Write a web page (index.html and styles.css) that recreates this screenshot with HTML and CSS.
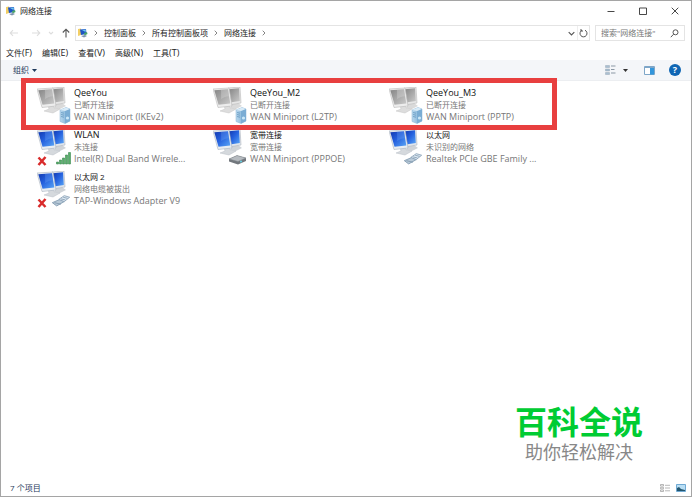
FILE: index.html
```
<!DOCTYPE html>
<html lang="zh-CN">
<head>
    <meta charset="UTF-8">
    <meta name="viewport" content="width=device-width, initial-scale=1.0">
    <title>网络连接</title>
    <link rel="stylesheet" href="styles.css">
</head>
<body>
    <svg class="defs" aria-hidden="true">
        <defs>
            <linearGradient id="blueScreen" x1="0" y1="0" x2="1" y2="1">
                <stop offset="0" stop-color="#1238ae"/>
                <stop offset="0.45" stop-color="#2460de"/>
                <stop offset="1" stop-color="#5aa6f6"/>
            </linearGradient>
            <linearGradient id="grayScreen" x1="0" y1="0" x2="1" y2="1">
                <stop offset="0" stop-color="#858585"/>
                <stop offset="0.5" stop-color="#a8a8a8"/>
                <stop offset="1" stop-color="#cacaca"/>
            </linearGradient>
            <linearGradient id="tower" x1="0" y1="0" x2="1" y2="0">
                <stop offset="0" stop-color="#b9d8ee"/>
                <stop offset="1" stop-color="#6ea5ce"/>
            </linearGradient>
            <!-- two monitors on their stands -->
            <symbol id="pcBlue" viewBox="0 0 30 27">
                <path d="M19 17l6-1 4 3-6 3-6-1z" fill="#d0d4d8"/>
                <path d="M15 1l12-1 1 16-12 2z" fill="#e1e6ec" stroke="#aeb6c0" stroke-width=".6"/>
                <path d="M16 2.200l10-.9.8 12.700-10 1.500z" fill="url(#blueScreen)"/>
                <path d="M11 18h5l1 3 6 1-7 4-9-2 5-2z" fill="#d5d9dd" stroke="#b9bfc6" stroke-width=".5"/>
                <path d="M0 2l16-1 3 18-14 1.500z" fill="#e8edf2" stroke="#aab4c0" stroke-width=".6"/>
                <path d="M1.300 3.200l13.700-.9L17.300 16.500 5.500 17.800z" fill="url(#blueScreen)"/>
                <path d="M8 2.800l7-.5 1.200 7c-3 0-6 1-8 3z" fill="#83b9f8" opacity=".25"/>
            </symbol>
            <symbol id="pcGray" viewBox="0 0 30 27">
                <path d="M19 17l6-1 4 3-6 3-6-1z" fill="#dadada"/>
                <path d="M15 1l12-1 1 16-12 2z" fill="#e6e6e6" stroke="#bbb" stroke-width=".6"/>
                <path d="M16 2.200l10-.9.8 12.700-10 1.500z" fill="url(#grayScreen)"/>
                <path d="M11 18h5l1 3 6 1-7 4-9-2 5-2z" fill="#ddd" stroke="#c4c4c4" stroke-width=".5"/>
                <path d="M0 2l16-1 3 18-14 1.500z" fill="#ededed" stroke="#bbb" stroke-width=".6"/>
                <path d="M1.300 3.200l13.700-.9L17.300 16.500 5.500 17.800z" fill="url(#grayScreen)"/>
                <path d="M8 2.800l7-.5 1.200 7c-3 0-6 1-8 3z" fill="#ddd" opacity=".35"/>
            </symbol>
            <symbol id="server" viewBox="0 0 12 17">
                <path d="M1 3l6-2.500 4 1.500v12l-5 2.500-5-2z" fill="url(#tower)" stroke="#88b2d2" stroke-width=".5"/>
                <path d="M6 4l5-2v12l-5 2.500z" fill="#7badd4"/>
                <path d="M1 3l6-2.500 4 1.500-5 2z" fill="#d9ebf7"/>
                <path d="M2 5.500l3 .7M2 7.500l3 .7M2 9.500l3 .7" stroke="#6598c0" stroke-width=".8"/>
                <circle cx="8.500" cy="11" r="1.600" fill="#cbe8f8"/>
            </symbol>
            <symbol id="signal" viewBox="0 0 15 13">
                <path d="M.5 10h2v2h-2zM3.500 8h2v4h-2zM6.500 6h2v6h-2zM9.500 3h2v9h-2zM12.500.5h2V12h-2z" fill="#58ae6a" stroke="#3c8a50" stroke-width=".6"/>
            </symbol>
            <symbol id="cable" viewBox="0 0 18 12">
                <path d="M1 8l7-3 4 2-7 4z" fill="#b9cad8" stroke="#8099af" stroke-width=".8"/>
                <path d="M7 5l5-3.500 5 1.500-5 4z" fill="#dce8f1" stroke="#8ba2b8" stroke-width=".8"/>
                <path d="M3 8l6 1.500M9 4.500l4 1M11 3l4 1" stroke="#6d89a3" stroke-width=".6"/>
            </symbol>
            <symbol id="modem" viewBox="0 0 19 10">
                <path d="M1 4l8-3.500 9 2.500v3l-8 3.500-9-3z" fill="#72777d"/>
                <path d="M1 4l8-3.500 9 2.500-8 3.500z" fill="#b6bbc0" stroke="#7d8288" stroke-width=".5"/>
                <circle cx="13" cy="6.500" r="1" fill="#67d5e8"/>
            </symbol>
            <symbol id="cross" viewBox="0 0 10 10">
                <path d="M1.500 1.500l7 7.500M8.500 1L1.500 9" stroke="#d92b2b" stroke-width="2.500"/>
            </symbol>
            <symbol id="folder" viewBox="0 0 10 10">
                <path d="M0 1l3-.5V7L0 8z" fill="#f2ce63"/>
                <path d="M2 1.500l6-.5.5 5-5.500 1z" fill="#1f55c4"/>
                <path d="M4 2l4-.5-.5 2.500z" fill="#70c9ef"/>
                <path d="M6 5l3-1 .5 2-3 1.500z" fill="#4aa46a"/>
                <path d="M3 8l4-1 2 1-3 1.500z" fill="#7d93ad"/>
            </symbol>
            <symbol id="chevron" viewBox="0 0 4 6">
                <path d="M.7.7L3 3 .7 5.300" fill="none" stroke="#777" stroke-width=".9"/>
            </symbol>
        </defs>
    </svg>

    <div class="window">
        <header class="titlebar">
            <svg class="small-icon"><use href="#folder"/></svg>
            <h1>网络连接</h1>
            <div class="window-buttons">
                <button type="button" aria-label="最小化"><svg viewBox="0 0 8 8"><path d="M.5 4.500h7"/></svg></button>
                <button type="button" aria-label="最大化"><svg viewBox="0 0 8 8"><path d="M.5 1h7v6.500h-7z"/></svg></button>
                <button type="button" aria-label="关闭"><svg viewBox="0 0 8 8"><path d="M.7.7l6.600 6.600M7.300.7L.7 7.300"/></svg></button>
            </div>
        </header>

        <div class="navbar">
            <div class="nav-buttons">
                <button type="button" aria-label="后退" disabled><svg viewBox="0 0 10 10"><path d="M9 5H1.500M4 2.200L1.200 5 4 7.800"/></svg></button>
                <button type="button" aria-label="前进" disabled><svg viewBox="0 0 10 10"><path d="M1 5h7.500M6 2.200L8.800 5 6 7.800"/></svg></button>
                <button type="button" class="recent" aria-label="最近" disabled><svg viewBox="0 0 10 10"><path d="M3 4l2 2 2-2"/></svg></button>
                <button type="button" aria-label="上移"><svg viewBox="0 0 10 10"><path d="M5 9.500V1.500M1.800 4.500L5 1.200l3.200 3.300"/></svg></button>
            </div>
            <nav class="address">
                <svg class="small-icon"><use href="#folder"/></svg>
                <svg class="chevron"><use href="#chevron"/></svg>
                <a href="#">控制面板</a>
                <svg class="chevron"><use href="#chevron"/></svg>
                <a href="#">所有控制面板项</a>
                <svg class="chevron"><use href="#chevron"/></svg>
                <a href="#">网络连接</a>
                <svg class="chevron"><use href="#chevron"/></svg>
                <button type="button" class="history" aria-label="历史记录"><svg viewBox="0 0 8 8"><path d="M1.500 2.800L4 5.300l2.500-2.500"/></svg></button>
                <button type="button" class="refresh" aria-label="刷新"><svg viewBox="0 0 9 9"><path d="M6 1.200a3.500 3.500 0 1 1-3.200.1M1 1h2v2"/></svg></button>
            </nav>
            <form class="search">
                <input type="search" placeholder='搜索"网络连接"' aria-label="搜索">
                <svg viewBox="0 0 9 9"><circle cx="5.500" cy="3.300" r="2.500"/><path d="M3.600 5.200L.8 8.200"/></svg>
            </form>
        </div>

        <div class="menubar">
            <button type="button">文件<span class="latin">(F)</span></button>
            <button type="button">编辑<span class="latin">(E)</span></button>
            <button type="button">查看<span class="latin">(V)</span></button>
            <button type="button">高级<span class="latin">(N)</span></button>
            <button type="button">工具<span class="latin">(T)</span></button>
        </div>

        <div class="toolbar">
            <button type="button" class="organize">组织 <svg class="caret" viewBox="0 0 5 3"><path d="M0 0h5L2.500 3z"/></svg></button>
            <div class="tools">
                <button type="button" aria-label="更改视图">
                    <svg class="view-icon" viewBox="0 0 11 10"><path d="M.5.5h4v2h-4zM.5 4h4v2h-4zM.5 7.500h4v2h-4z" fill="#a9bfd2" stroke="#8a9dad" stroke-width=".4"/><path d="M6 1h4.500M6 4.500h3.500M6 8h4.500" stroke="#8b98a5"/></svg>
                </button>
                <button type="button" aria-label="更多选项"><svg class="caret dark" viewBox="0 0 5 3"><path d="M0 0h5L2.500 3z"/></svg></button>
                <button type="button" class="preview" aria-label="预览窗格">
                    <svg class="pane-icon" viewBox="0 0 11 9"><path d="M.5.5h10v8H.5z" fill="#fff" stroke="#7ea6c8"/><path d="M.5 1.500h10" stroke="#7ea6c8"/><path d="M6 2h4v6.500H6z" fill="#3296dc"/></svg>
                </button>
                <button type="button" class="help" aria-label="帮助">?</button>
            </div>
        </div>

        <main class="content">
            <ul class="connections">
                <li class="connection">
                    <div class="icon"><svg class="pc"><use href="#pcGray"/></svg><svg class="badge server"><use href="#server"/></svg></div>
                    <div class="info"><p class="name latin">QeeYou</p><p>已断开连接</p><p class="latin">WAN Miniport (IKEv2)</p></div>
                </li>
                <li class="connection">
                    <div class="icon"><svg class="pc"><use href="#pcGray"/></svg><svg class="badge server"><use href="#server"/></svg></div>
                    <div class="info"><p class="name latin">QeeYou_M2</p><p>已断开连接</p><p class="latin">WAN Miniport (L2TP)</p></div>
                </li>
                <li class="connection">
                    <div class="icon"><svg class="pc"><use href="#pcGray"/></svg><svg class="badge server"><use href="#server"/></svg></div>
                    <div class="info"><p class="name latin">QeeYou_M3</p><p>已断开连接</p><p class="latin">WAN Miniport (PPTP)</p></div>
                </li>
                <li class="connection">
                    <div class="icon"><svg class="pc"><use href="#pcBlue"/></svg><svg class="cross"><use href="#cross"/></svg><svg class="badge signal"><use href="#signal"/></svg></div>
                    <div class="info"><p class="name latin">WLAN</p><p>未连接</p><p class="latin">Intel(R) Dual Band Wirele...</p></div>
                </li>
                <li class="connection">
                    <div class="icon"><svg class="pc"><use href="#pcBlue"/></svg><svg class="badge modem"><use href="#modem"/></svg></div>
                    <div class="info"><p class="name">宽带连接</p><p>宽带连接</p><p class="latin">WAN Miniport (PPPOE)</p></div>
                </li>
                <li class="connection">
                    <div class="icon"><svg class="pc"><use href="#pcBlue"/></svg><svg class="badge cable"><use href="#cable"/></svg></div>
                    <div class="info"><p class="name">以太网</p><p>未识别的网络</p><p class="latin">Realtek PCIe GBE Family ...</p></div>
                </li>
                <li class="connection">
                    <div class="icon"><svg class="pc"><use href="#pcBlue"/></svg><svg class="cross"><use href="#cross"/></svg><svg class="badge cable"><use href="#cable"/></svg></div>
                    <div class="info"><p class="name">以太网 2</p><p>网络电缆被拔出</p><p class="latin">TAP-Windows Adapter V9</p></div>
                </li>
            </ul>
            <div class="highlight"></div>
        </main>

        <footer class="statusbar">
            <span>7 个项目</span>
            <div class="view-buttons">
                <button type="button" aria-label="详细信息"><svg viewBox="0 0 10 8"><path d="M.5.5h3v1.500h-3zM.5 3.300h3v1.500h-3zM.5 6h3v1.500h-3zM5 1.300h5M5 4h5M5 6.800h5" fill="none" stroke="#999" stroke-width=".7"/></svg></button>
                <button type="button" aria-label="大图标"><svg viewBox="0 0 10 8"><path d="M.5.5h9v7h-9z" fill="#b9def4" stroke="#6fa9d3"/><path d="M1 7V4l2-1 2 2 4 1v1z" fill="#24566f"/></svg></button>
            </div>
        </footer>

        <div class="watermark">
            <p class="brand">百科全说</p>
            <p class="slogan">助你轻松解决</p>
        </div>
    </div>
</body>
</html>
```

FILE: styles.css
```
* {
    box-sizing: border-box;
}

body {
    margin: 0;
    font-family: "Open Sans", "Noto Sans CJK SC", sans-serif;
    font-size: 8px;
    line-height: 12px;
    color: #222;
}

h1, p, ul {
    margin: 0;
    padding: 0;
}

button {
    display: flex;
    align-items: center;
    justify-content: center;
    padding: 0;
    border: none;
    background: none;
    font: inherit;
    color: inherit;
}

svg {
    display: block;
    flex: none;
}

.defs {
    position: absolute;
    width: 0;
    height: 0;
}

.latin {
    font-size: 9px;
}

.window {
    position: relative;
    display: flex;
    flex-direction: column;
    min-height: 100vh;
    border: 1px solid #a5a5a5;
    background-color: #fff;
}

.small-icon {
    width: 10px;
    height: 10px;
}

/* title bar */
.titlebar {
    display: flex;
    align-items: center;
    height: 20px;
    padding-left: 5px;
    gap: 4px;
}

.titlebar h1 {
    font-size: 8px;
    font-weight: normal;
}

.window-buttons {
    display: flex;
    margin-left: auto;
}

.window-buttons button {
    width: 32px;
    height: 20px;
}

.window-buttons svg {
    width: 8px;
    height: 8px;
    fill: none;
    stroke: #333;
    stroke-width: 0.9;
}

/* address bar */
.navbar {
    display: flex;
    align-items: center;
    height: 24px;
    padding-right: 6px;
}

.nav-buttons {
    display: flex;
    width: 74px;
    padding-left: 8px;
    gap: 12px;
}

.nav-buttons svg {
    width: 10px;
    height: 10px;
    fill: none;
    stroke: #555;
    stroke-width: 1.1;
}

.nav-buttons button:disabled svg {
    stroke: #ddd;
}

.nav-buttons .recent {
    width: 8px;
    margin: 0 -6px;
}

.address {
    display: flex;
    flex: 1;
    align-items: center;
    height: 16px;
    padding-left: 2px;
    gap: 5px;
    border: 1px solid #e4e4e4;
}

.address a {
    color: #222;
    text-decoration: none;
}

.chevron {
    width: 4px;
    height: 6px;
    margin: 0 1px;
}

.address button svg {
    width: 9px;
    height: 9px;
    fill: none;
    stroke: #555;
    stroke-width: 1;
}

.history {
    margin-left: auto;
}

.refresh {
    width: 12px;
    height: 14px;
    margin-left: -4px;
    border-left: 1px solid #eee;
}

.search {
    display: flex;
    align-items: center;
    width: 90px;
    height: 16px;
    margin-left: 5px;
    padding: 0 5px;
    border: 1px solid #e4e4e4;
}

.search input {
    flex: 1;
    min-width: 0;
    padding: 0;
    border: none;
    outline: none;
    font: inherit;
}

.search input::placeholder {
    color: #777;
}

.search svg {
    width: 9px;
    height: 9px;
    fill: none;
    stroke: #555;
}

/* menu and toolbar */
.menubar {
    display: flex;
    align-items: center;
    height: 15px;
    padding-left: 5px;
    gap: 10px;
}

.toolbar {
    display: flex;
    align-items: center;
    justify-content: space-between;
    height: 21px;
    padding: 0 10px 0 12px;
    border-bottom: 1px solid #eceef1;
    background-color: #f4f6f9;
}

.organize {
    gap: 3px;
    color: #1e395b;
}

.caret {
    width: 5px;
    height: 3px;
    fill: #1e395b;
}

.caret.dark {
    fill: #333;
}

.tools {
    display: flex;
    align-items: center;
    gap: 7px;
}

.view-icon {
    width: 11px;
    height: 10px;
}

.preview {
    margin: 0 7px 0 9px;
}

.pane-icon {
    width: 11px;
    height: 9px;
}

.help {
    width: 12px;
    height: 12px;
    border-radius: 50%;
    background-color: #0f66b4;
    color: #fff;
    font-size: 9px;
    font-weight: bold;
}

/* connection list */
.content {
    position: relative;
    flex: 1;
    padding: 6px 20px 0 36px;
}

.connections {
    display: grid;
    grid-template-columns: repeat(auto-fill, 176px);
    row-gap: 4px;
    list-style: none;
}

.connection {
    display: flex;
    height: 38px;
    gap: 3px;
}

.icon {
    position: relative;
    width: 34px;
}

.pc {
    width: 30px;
    height: 27px;
}

.badge,
.cross {
    position: absolute;
    right: 0;
    bottom: 2px;
}

.cross {
    left: 0;
    bottom: 1px;
    width: 10px;
    height: 10px;
}

.server {
    bottom: 1px;
    width: 12px;
    height: 17px;
}

.signal {
    width: 15px;
    height: 13px;
}

.cable {
    width: 20px;
    height: 13px;
}

.modem {
    width: 19px;
    height: 10px;
}

.info {
    color: #777;
    white-space: nowrap;
}

.info .name {
    color: #111;
}

/* red frame round the first row */
.highlight {
    position: absolute;
    top: -3px;
    left: 20px;
    width: 536px;
    height: 52px;
    border: 5px solid #e83f3f;
}

/* status bar */
.statusbar {
    display: flex;
    align-items: center;
    justify-content: space-between;
    height: 16px;
    padding: 0 5px 0 9px;
    color: #1e395b;
}

.view-buttons {
    display: flex;
    gap: 6px;
}

.view-buttons svg {
    width: 10px;
    height: 8px;
}

.watermark {
    position: absolute;
    right: 48px;
    bottom: 32px;
    text-align: center;
}

.brand {
    font-size: 32px;
    font-weight: bold;
    line-height: 36px;
    color: #0c3;
}

.slogan {
    font-size: 18px;
    line-height: 24px;
    color: #888;
}
```
